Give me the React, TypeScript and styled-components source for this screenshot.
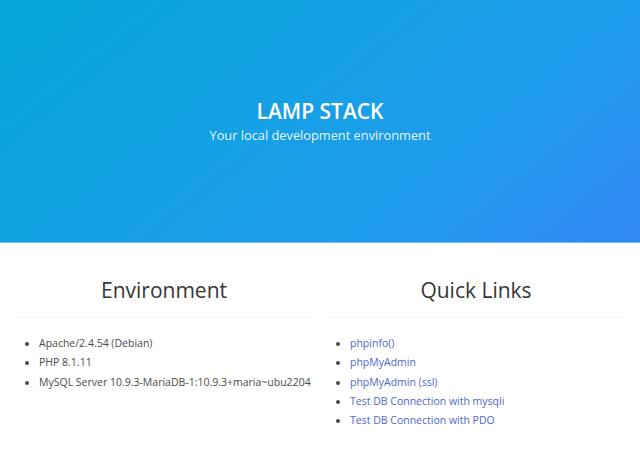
import styled, { createGlobalStyle } from 'styled-components'

const GlobalStyle = createGlobalStyle`
  html, body {
    margin: 0;
    padding: 0;
    background: #fff;
    font-family: "Open Sans", "Noto Sans", sans-serif;
    color: #4a4a4a;
  }
`

const Hero = styled.section`
  height: 242px;
  display: flex;
  flex-direction: column;
  align-items: center;
  justify-content: center;
  background-image: linear-gradient(141deg, #04a6d7 0%, #209cee 71%, #3287f5 100%);
  border-bottom: 1px solid #79bdf3;
  color: #fff;
  text-align: center;
`

const Title = styled.h1`
  margin: 0;
  font-size: 21px;
  font-weight: 600;
  line-height: 1.15;
`

const Subtitle = styled.h2`
  margin: 4px 0 0;
  font-size: 12.8px;
  font-weight: 400;
  line-height: 1.25;
  color: rgba(255, 255, 255, 0.92);
`

const Columns = styled.div`
  display: grid;
  grid-template-columns: 1fr 1fr;
  gap: 16px;
  padding: 33px 16px 0;
`

const Column = styled.div`
  display: flex;
  flex-direction: column;
`

const Heading = styled.h3`
  margin: 0;
  font-size: 21px;
  font-weight: 400;
  line-height: 28px;
  color: #363636;
  text-align: center;
`

const Rule = styled.hr`
  margin: 13px 0 16px;
  border: none;
  height: 1px;
  background: #f2f2f2;
`

const List = styled.ul<{ $indent: number }>`
  margin: 0;
  padding-left: ${p => p.$indent}px;
  font-size: 10.5px;
  line-height: 19.3px;
  list-style: disc;
`

const Link = styled.a`
  color: #4d66cf;
  text-decoration: none;
`

const environment = [
  'Apache/2.4.54 (Debian)',
  'PHP 8.1.11',
  'MySQL Server 10.9.3-MariaDB-1:10.9.3+maria~ubu2204',
]

const links = [
  'phpinfo()',
  'phpMyAdmin',
  'phpMyAdmin (ssl)',
  'Test DB Connection with mysqli',
  'Test DB Connection with PDO',
]

export default function App() {
  return (
    <>
      <GlobalStyle />
      <Hero>
        <Title>LAMP STACK</Title>
        <Subtitle>Your local development environment</Subtitle>
      </Hero>
      <Columns>
        <Column>
          <Heading>Environment</Heading>
          <Rule />
          <List $indent={23}>
            {environment.map(item => (
              <li key={item}>{item}</li>
            ))}
          </List>
        </Column>
        <Column>
          <Heading>Quick Links</Heading>
          <Rule />
          <List $indent={22}>
            {links.map(item => (
              <li key={item}>
                <Link href="#">{item}</Link>
              </li>
            ))}
          </List>
        </Column>
      </Columns>
    </>
  )
}
